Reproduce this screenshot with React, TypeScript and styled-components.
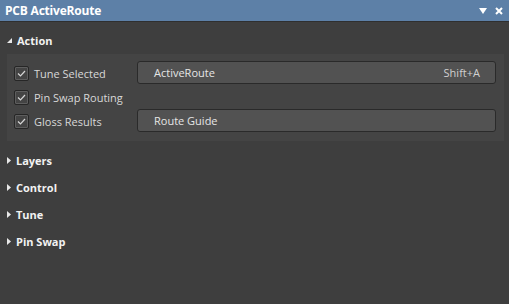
import styled, { createGlobalStyle } from "styled-components";

const GlobalStyle = createGlobalStyle`
  html, body {
    margin: 0;
    padding: 0;
    background: #3e3e3e;
  }

  body {
    font-family: "Open Sans", "Noto Sans", sans-serif;
    color: #dcdcdc;
  }
`;

const Panel = styled.div`
  width: 509px;
  height: 304px;
  background: #3e3e3e;
  display: flex;
  flex-direction: column;
`;

const TitleBar = styled.div`
  height: 22px;
  flex: none;
  display: flex;
  align-items: center;
  justify-content: space-between;
  padding: 0 6px 0 5px;
  background: #5d80a7;
  border-bottom: 1px solid #2f2f2f;
  box-sizing: border-box;

  .title {
    font-size: 12px;
    font-weight: 700;
    color: #ffffff;
    letter-spacing: -0.2px;
  }

  .tools {
    display: flex;
    align-items: center;
    gap: 8px;
  }
`;

const Sections = styled.div`
  padding-top: 5px;
  display: flex;
  flex-direction: column;
`;

const SectionHead = styled.div`
  height: 27px;
  display: flex;
  align-items: center;
  gap: 5px;
  padding-left: 7px;
  font-size: 11px;
  font-weight: 700;
  color: #f2f2f2;
`;

const Body = styled.div`
  margin: 0 5px 6px 7px;
  padding: 7px 8px 8px 7px;
  background: #444444;
  display: grid;
  grid-template-columns: 123px 1fr;
  grid-auto-rows: 24px;
`;

const Check = styled.label`
  display: flex;
  align-items: center;
  gap: 5px;
  font-size: 11px;
  color: #d8d8d8;
  white-space: nowrap;
`;

const Box = styled.span`
  width: 13px;
  height: 13px;
  flex: none;
  border: 1px solid #262626;
  border-radius: 2px;
  background: #444;
  box-shadow: inset 0 0 0 1px #5e5e5e;
  display: flex;
  align-items: center;
  justify-content: center;
`;

const Field = styled.div`
  height: 23px;
  box-sizing: border-box;
  align-self: start;
  display: flex;
  align-items: center;
  justify-content: space-between;
  padding: 0 15px 0 16px;
  border: 1px solid #2a2a2a;
  border-radius: 3px;
  background: #525252;
  font-size: 11px;
  color: #e6e6e6;

  .key {
    color: #d0d0d0;
  }
`;

function Tick() {
  return (
    <svg width="9" height="7" viewBox="0 0 9 7">
      <path d="M1 3.5 L3.5 6 L8 1" fill="none" stroke="#d6d6d6" strokeWidth="1.2" />
    </svg>
  );
}

function Arrow({ open }: { open?: boolean }) {
  return open ? (
    <svg width="5" height="5" viewBox="0 0 5 5">
      <path d="M5 0 L5 5 L0 5 Z" fill="#e8e8e8" />
    </svg>
  ) : (
    <svg width="4" height="7" viewBox="0 0 4 7">
      <path d="M0 0 L4 3.5 L0 7 Z" fill="#e8e8e8" />
    </svg>
  );
}

function CheckRow({ label }: { label: string }) {
  return (
    <Check>
      <Box>
        <Tick />
      </Box>
      {label}
    </Check>
  );
}

const collapsed = ["Layers", "Control", "Tune", "Pin Swap"];

export default function App() {
  return (
    <Panel>
      <GlobalStyle />
      <TitleBar>
        <span className="title">PCB ActiveRoute</span>
        <span className="tools">
          <svg width="8" height="6" viewBox="0 0 8 6">
            <path d="M0 0 L8 0 L4 6 Z" fill="#ffffff" />
          </svg>
          <svg width="8" height="8" viewBox="0 0 8 8">
            <path d="M1 1 L7 7 M7 1 L1 7" stroke="#ffffff" strokeWidth="2" />
          </svg>
        </span>
      </TitleBar>
      <Sections>
        <SectionHead>
          <Arrow open />
          Action
        </SectionHead>
        <Body>
          <CheckRow label="Tune Selected" />
          <Field>
            <span>ActiveRoute</span>
            <span className="key">Shift+A</span>
          </Field>
          <CheckRow label="Pin Swap Routing" />
          <div />
          <CheckRow label="Gloss Results" />
          <Field>
            <span>Route Guide</span>
          </Field>
        </Body>
        {collapsed.map((name) => (
          <SectionHead key={name}>
            <Arrow />
            {name}
          </SectionHead>
        ))}
      </Sections>
    </Panel>
  );
}
